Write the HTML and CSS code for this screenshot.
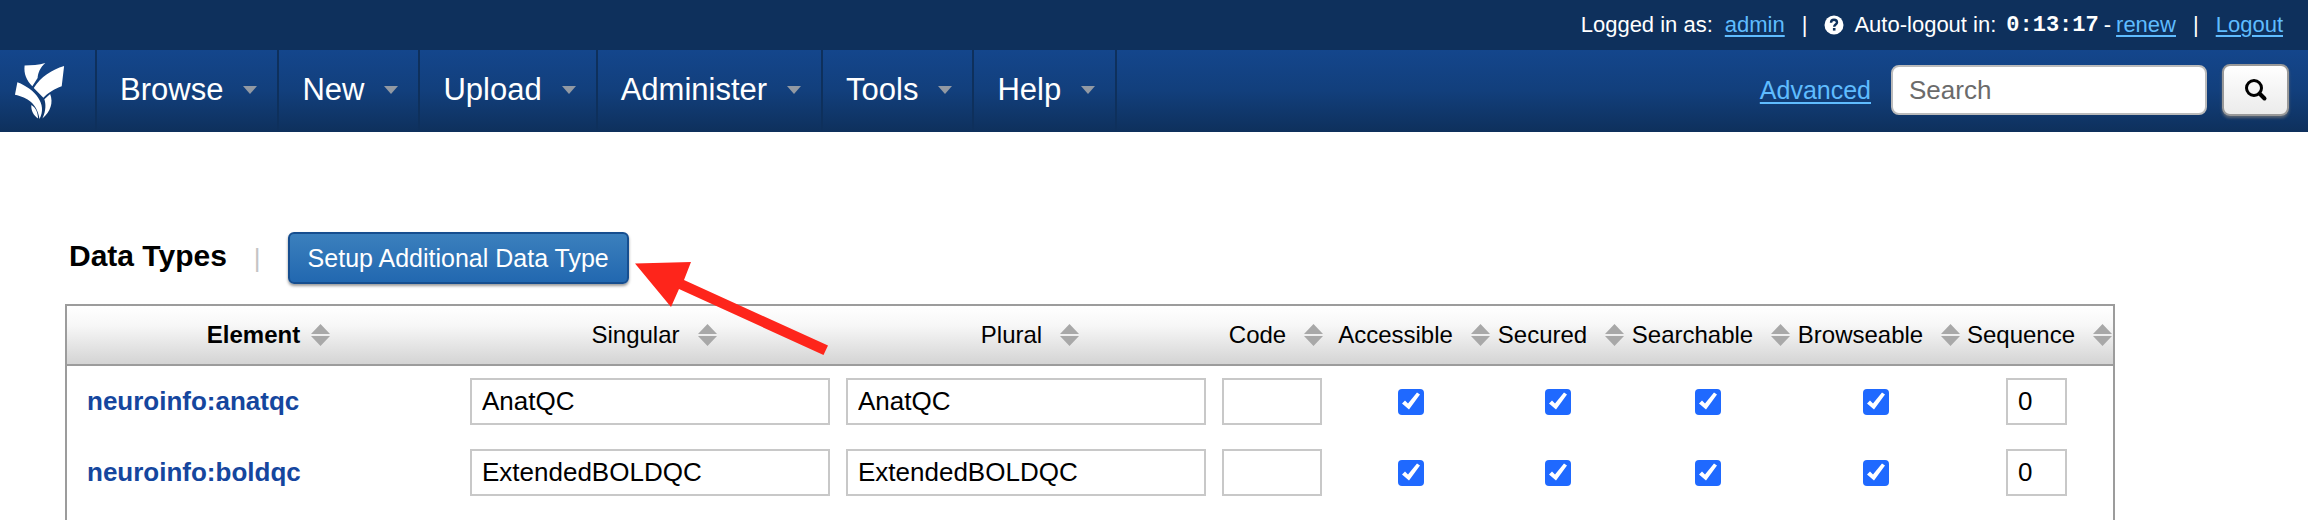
FILE: index.html
```html
<!DOCTYPE html>
<html lang="en">
<head>
<meta charset="utf-8">
<title>Data Types</title>
<link rel="stylesheet" href="styles.css">
</head>
<body>
<svg class="defs" width="0" height="0" aria-hidden="true">
  <symbol id="sort" viewBox="0 0 19 22"><path d="M9.500 0 19 10H0zM0 12h19l-9.500 10z"/></symbol>
</svg>
<div class="userbar">
  <span class="logged">Logged in as:</span>
  <a class="user" href="#admin">admin</a>
  <span class="bar">|</span>
  <svg class="help" viewBox="0 0 20 20" aria-hidden="true"><circle cx="10" cy="10" r="9.500" fill="#fff"/><path d="M7 7.800C7 5.500 8.300 4.700 10 4.700s3 1 3 2.700c0 2.200-2.800 2-2.800 4.300" fill="none" stroke="#0e305c" stroke-width="2.400"/><rect x="8.900" y="13" width="2.600" height="2.600" fill="#0e305c"/></svg>
  <span>Auto-logout in:</span>
  <span class="time">0:13:17</span>
  <span class="dash">-</span>
  <a href="#renew">renew</a>
  <span class="bar">|</span>
  <a href="#logout">Logout</a>
</div>
<header class="mainbar">
  <nav class="menu">
    <a class="logo" href="#home" aria-label="Home">
      <svg viewBox="0 0 55 60" aria-hidden="true"><g fill="#fff"><path d="M11 3.500C18 3.500 26 3 32.500 1 27 6 25 11 24.500 16.500L19 25C13 19 10 12 11 3.500z"/><path d="M52 4 49.500 25C42 27.500 35 32 30.500 37L20.500 27C28 15 39 8 52 4z"/><path d="M3.500 21 1 34C14 37 24 43 26.500 59 35 44 22 28 3.500 21z"/><path d="M37.500 33C41 42 38 51 29.500 58.500 33.500 50 33 43 31.500 38.500z"/><path d="M18 44.500C23 47.500 24.500 52 25 58.500 20 55 17.500 50 18 44.500z"/></g></svg>
    </a>
    <button class="item">Browse<i class="caret"></i></button>
    <button class="item">New<i class="caret"></i></button>
    <button class="item">Upload<i class="caret"></i></button>
    <button class="item">Administer<i class="caret"></i></button>
    <button class="item">Tools<i class="caret"></i></button>
    <button class="item">Help<i class="caret"></i></button>
  </nav>
  <form class="search">
    <a href="#advanced">Advanced</a>
    <input type="text" placeholder="Search" aria-label="Search">
    <button type="button" aria-label="Run search"><svg viewBox="0 0 24 24" aria-hidden="true"><circle cx="10" cy="10" r="7.500" fill="none" stroke="#000" stroke-width="3"/><path d="m15.500 15.500 5 5" stroke="#000" stroke-width="4" stroke-linecap="round"/></svg></button>
  </form>
</header>
<main class="content">
  <div class="title">
    <h1>Data Types</h1>
    <span class="divider">|</span>
    <button class="setup">Setup Additional Data Type</button>
    <svg class="pointer" viewBox="0 0 194 94" aria-hidden="true"><path d="M0 1.500 56 0 49 18 193 83.500 188.500 93 44 27 36 45z" fill="#fe251b"/></svg>
  </div>
  <div class="frame">
    <table>
      <colgroup><col class="c-element"><col class="c-name"><col class="c-name"><col class="c-code"><col class="c-access"><col class="c-secure"><col class="c-flag"><col class="c-flag"><col class="c-seq"></colgroup>
      <thead>
        <tr>
          <th class="wide sorted"><div>Element<svg><use href="#sort"/></svg></div></th>
          <th class="wide"><div>Singular<svg><use href="#sort"/></svg></div></th>
          <th class="wide"><div>Plural<svg><use href="#sort"/></svg></div></th>
          <th class="wide"><div>Code<svg><use href="#sort"/></svg></div></th>
          <th><div>Accessible<svg><use href="#sort"/></svg></div></th>
          <th><div>Secured<svg><use href="#sort"/></svg></div></th>
          <th><div>Searchable<svg><use href="#sort"/></svg></div></th>
          <th><div>Browseable<svg><use href="#sort"/></svg></div></th>
          <th><div>Sequence<svg><use href="#sort"/></svg></div></th>
        </tr>
      </thead>
      <tbody>
        <tr>
          <td class="element"><a href="#anatqc">neuroinfo:anatqc</a></td>
          <td><input class="field" type="text" value="AnatQC" aria-label="Singular"></td>
          <td><input class="field" type="text" value="AnatQC" aria-label="Plural"></td>
          <td><input class="field" type="text" aria-label="Code"></td>
          <td><input class="tick" type="checkbox" checked aria-label="Accessible"></td>
          <td><input class="tick" type="checkbox" checked aria-label="Secured"></td>
          <td><input class="tick" type="checkbox" checked aria-label="Searchable"></td>
          <td><input class="tick" type="checkbox" checked aria-label="Browseable"></td>
          <td><input class="field seq" type="text" value="0" aria-label="Sequence"></td>
        </tr>
        <tr>
          <td class="element"><a href="#boldqc">neuroinfo:boldqc</a></td>
          <td><input class="field" type="text" value="ExtendedBOLDQC" aria-label="Singular"></td>
          <td><input class="field" type="text" value="ExtendedBOLDQC" aria-label="Plural"></td>
          <td><input class="field" type="text" aria-label="Code"></td>
          <td><input class="tick" type="checkbox" checked aria-label="Accessible"></td>
          <td><input class="tick" type="checkbox" checked aria-label="Secured"></td>
          <td><input class="tick" type="checkbox" checked aria-label="Searchable"></td>
          <td><input class="tick" type="checkbox" checked aria-label="Browseable"></td>
          <td><input class="field seq" type="text" value="0" aria-label="Sequence"></td>
        </tr>
      </tbody>
    </table>
  </div>
</main>
</body>
</html>
```

FILE: styles.css
```css
* { box-sizing: border-box; }
body {
  margin: 0;
  min-height: 100vh;
  display: flex;
  flex-direction: column;
  background: #fff;
  color: #000;
  font-family: "Liberation Sans", Arial, sans-serif;
  font-size: 24px;
}
button, input { font-family: inherit; margin: 0; }
.defs { position: absolute; }

.userbar {
  display: flex;
  justify-content: flex-end;
  align-items: center;
  height: 50px;
  padding-right: 25px;
  background: #0e305c;
  color: #fff;
  font-size: 22px;
}
.userbar a, .search a { color: #5fbcff; text-decoration: underline; text-underline-offset: 3px; text-decoration-thickness: 2px; }
.user { margin-left: 12px; }
.bar { margin: 0 17px; }
.help { width: 20px; height: 20px; margin-right: 10px; }
.time { margin-left: 10px; font-family: "Liberation Mono", monospace; font-weight: bold; }
.dash { margin: 0 5px; }

.mainbar {
  display: flex;
  justify-content: space-between;
  height: 82px;
  background: linear-gradient(#14468c, #123f7c 50%, #0e305c);
}
.menu { display: flex; }
.logo, .item {
  display: flex;
  align-items: center;
  border: 0;
  border-right: 2px solid #0e305c;
}
.logo { padding: 0 28px 0 14px; }
.logo svg { width: 53px; height: 60px; }
.item { gap: 20px; padding: 0 20px 2px 23px; background: none; color: #fff; font-size: 31px; }
.caret { border: 7px solid transparent; border-top: 8px solid #9299a3; border-bottom: 0; }

.search { display: flex; align-items: center; padding-right: 19px; margin-top: -2px; }
.search a { font-size: 25px; margin-right: 20px; }
.search input {
  width: 316px;
  height: 50px;
  margin-right: 15px;
  padding: 0 16px;
  border: 2px solid #bbb;
  border-radius: 8px;
  background: #fff;
  font-size: 26px;
}
.search input::placeholder { color: #6b6b6b; }
.search button {
  display: flex;
  align-items: center;
  justify-content: center;
  width: 67px;
  height: 52px;
  padding: 0;
  border: 2px solid #999;
  border-radius: 8px;
  background: linear-gradient(#fff, #ebebeb);
  box-shadow: 0 2px 3px rgba(120, 120, 120, 0.7);
}
.search svg { width: 24px; height: 24px; }

.content { flex: 1; display: flex; flex-direction: column; padding: 100px 193px 0 65px; }
.title { position: relative; display: flex; align-items: center; align-self: flex-start; padding-left: 4px; margin-bottom: 20px; }
h1 { margin: 0; padding-bottom: 4px; font-size: 30px; }
.divider { margin: 0 27px; color: #c4c4c4; font-size: 26px; }
.setup {
  height: 52px;
  padding: 0 18px;
  border: 2px solid #164e8f;
  border-radius: 6px;
  background: linear-gradient(#3b80bd, #2268b0);
  box-shadow: 0 2px 3px rgba(0, 0, 0, 0.4);
  color: #fff;
  font-size: 25px;
}
.pointer { position: absolute; left: 100%; top: 30px; width: 194px; height: 94px; margin-left: 6px; z-index: 1; }

.frame { flex: 1; border: 2px solid #9c9c9c; border-bottom: 0; }
table { width: 100%; border-collapse: separate; border-spacing: 0; table-layout: fixed; }
.c-element { width: 395px; }
.c-name { width: 376px; }
.c-code { width: 116px; }
.c-access { width: 162px; }
.c-secure { width: 132px; }
.c-flag { width: 168px; }
.c-seq { width: 153px; }
thead { background: linear-gradient(#fff, #f7f7f7 33%, #d2d2d2); }
th { height: 60px; padding: 0 0 0 6px; border-bottom: 2px solid #9c9c9c; font-weight: normal; }
th.wide { padding-left: 8px; }
th div { display: flex; align-items: center; justify-content: center; gap: 18px; }
th.sorted { font-weight: bold; }
.sorted div { gap: 11px; }
th svg { width: 19px; height: 22px; flex: none; fill: #a8a8a8; }
td { height: 71px; padding: 0 8px; text-align: center; }
td.element { padding-left: 20px; text-align: left; }
.element a { color: #15469e; font-size: 26px; font-weight: bold; text-decoration: none; }
.field {
  display: block;
  width: 100%;
  height: 47px;
  padding: 0 10px;
  border: 2px solid #c8c8c8;
  background: #fff;
  color: #000;
  font-size: 26px;
}
.seq { width: 61px; margin: 0 auto; }
.tick {
  appearance: none;
  display: block;
  width: 26px;
  height: 26px;
  margin: 0 auto;
  border-radius: 4px;
  background: #1f69ff;
}
.tick:checked::before {
  content: "";
  display: block;
  width: 26px;
  height: 26px;
  background: #fff;
  clip-path: polygon(4px 15px, 7px 12px, 10px 15px, 19px 4px, 22px 6px, 11px 21px);
}
```
